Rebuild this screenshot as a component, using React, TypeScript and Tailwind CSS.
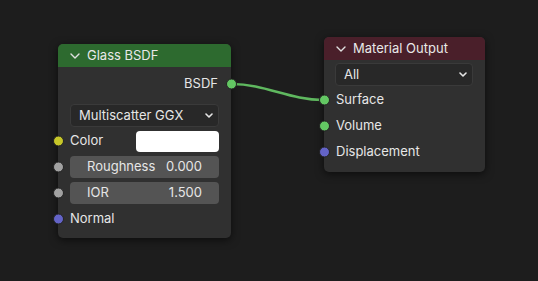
import React from 'react';

const font = { fontFamily: 'Inter, "Noto Sans", sans-serif' };

function Chevron({ className = '' }: { className?: string }) {
  return (
    <svg width="10" height="6" viewBox="0 0 10 6" className={className}>
      <path d="M1 1 L5 5 L9 1" fill="none" stroke="currentColor" strokeWidth="1.4" strokeLinecap="round" strokeLinejoin="round" />
    </svg>
  );
}

function SmallChevron() {
  return (
    <svg width="8" height="5" viewBox="0 0 8 5" className="text-[#e6e6e6]">
      <path d="M1 1 L4 4 L7 1" fill="none" stroke="currentColor" strokeWidth="1.6" strokeLinecap="round" strokeLinejoin="round" />
    </svg>
  );
}

function Socket({ color, side }: { color: string; side: 'left' | 'right' }) {
  return (
    <span
      className={`absolute top-1/2 -translate-y-1/2 w-[11px] h-[11px] rounded-full border border-[#222222] ${
        side === 'left' ? 'left-[-5.5px]' : 'right-[-5.5px]'
      }`}
      style={{ backgroundColor: color }}
    />
  );
}

function Field({ label, value }: { label: string; value: string }) {
  return (
    <div className="flex items-center justify-between h-[22px] rounded-[4px] bg-[#545454] px-[17px] text-[13px] text-[#e6e6e6]">
      <span>{label}</span>
      <span>{value}</span>
    </div>
  );
}

export default function App() {
  return (
    <div className="relative w-[538px] h-[281px] bg-[#1d1d1d] overflow-hidden" style={font}>
      {/* link */}
      <svg className="absolute inset-0" width="538" height="281">
        <path d="M232 84 C 265 84, 290 100, 323 100" fill="none" stroke="#5fb85f" strokeWidth="2.5" />
      </svg>

      {/* Glass BSDF node */}
      <div className="absolute left-[58px] top-[44px] w-[173px] h-[194px] rounded-[5px] bg-[#303030] shadow-[0_2px_8px_rgba(0,0,0,0.6)] flex flex-col">
        <div className="flex items-center gap-[7px] h-[23px] pl-[12px] rounded-t-[5px] bg-[#2d6a2f] text-[13px] text-[#e8e8e8]">
          <Chevron className="text-[#e0e0e0]" />
          <span>Glass BSDF</span>
        </div>
        <div className="flex flex-col pt-[4px] px-[12px]">
          <div className="relative flex items-center justify-end h-[25px] text-[13px] text-[#e6e6e6] -mr-[12px] pr-[13px]">
            <span>BSDF</span>
            <Socket color="#63c763" side="right" />
          </div>
          <div className="mt-[8px] flex items-center justify-between h-[23px] rounded-[4px] bg-[#282828] border border-[#3a3a3a] pl-[8px] pr-[5px] text-[13px] text-[#e6e6e6]">
            <span>Multiscatter GGX</span>
            <SmallChevron />
          </div>
          <div className="relative flex items-center justify-between h-[26px] -ml-[12px] pl-[12px] mt-[1px]">
            <Socket color="#c7c729" side="left" />
            <span className="text-[13px] text-[#e6e6e6]">Color</span>
            <span className="w-[83px] h-[21px] rounded-[4px] bg-white" />
          </div>
          <div className="relative flex flex-col justify-center h-[26px] -ml-[12px] pl-[12px]">
            <Socket color="#a1a1a1" side="left" />
            <Field label="Roughness" value="0.000" />
          </div>
          <div className="relative flex flex-col justify-center h-[26px] -ml-[12px] pl-[12px]">
            <Socket color="#a1a1a1" side="left" />
            <Field label="IOR" value="1.500" />
          </div>
          <div className="relative flex items-center h-[26px] -ml-[12px] pl-[12px]">
            <Socket color="#6363c7" side="left" />
            <span className="text-[13px] text-[#e6e6e6]">Normal</span>
          </div>
        </div>
      </div>

      {/* Material Output node */}
      <div className="absolute left-[324px] top-[37px] w-[161px] h-[135px] rounded-[5px] bg-[#303030] shadow-[0_2px_8px_rgba(0,0,0,0.6)] flex flex-col">
        <div className="flex items-center gap-[7px] h-[23px] pl-[12px] rounded-t-[5px] bg-[#4a1f2a] text-[13px] text-[#e8e8e8]">
          <Chevron className="text-[#e0e0e0]" />
          <span>Material Output</span>
        </div>
        <div className="flex flex-col pt-[3px] pl-[11px] pr-[12px]">
          <div className="flex items-center justify-between h-[23px] rounded-[4px] bg-[#282828] border border-[#3a3a3a] pl-[8px] pr-[5px] text-[13px] text-[#e6e6e6]">
            <span>All</span>
            <SmallChevron />
          </div>
          <div className="flex flex-col mt-[1px]">
            {[
              { label: 'Surface', color: '#63c763' },
              { label: 'Volume', color: '#63c763' },
              { label: 'Displacement', color: '#6363c7' },
            ].map((s) => (
              <div key={s.label} className="relative flex items-center h-[26px] -ml-[11px] pl-[12px]">
                <Socket color={s.color} side="left" />
                <span className="text-[13px] text-[#e6e6e6]">{s.label}</span>
              </div>
            ))}
          </div>
        </div>
      </div>
    </div>
  );
}
